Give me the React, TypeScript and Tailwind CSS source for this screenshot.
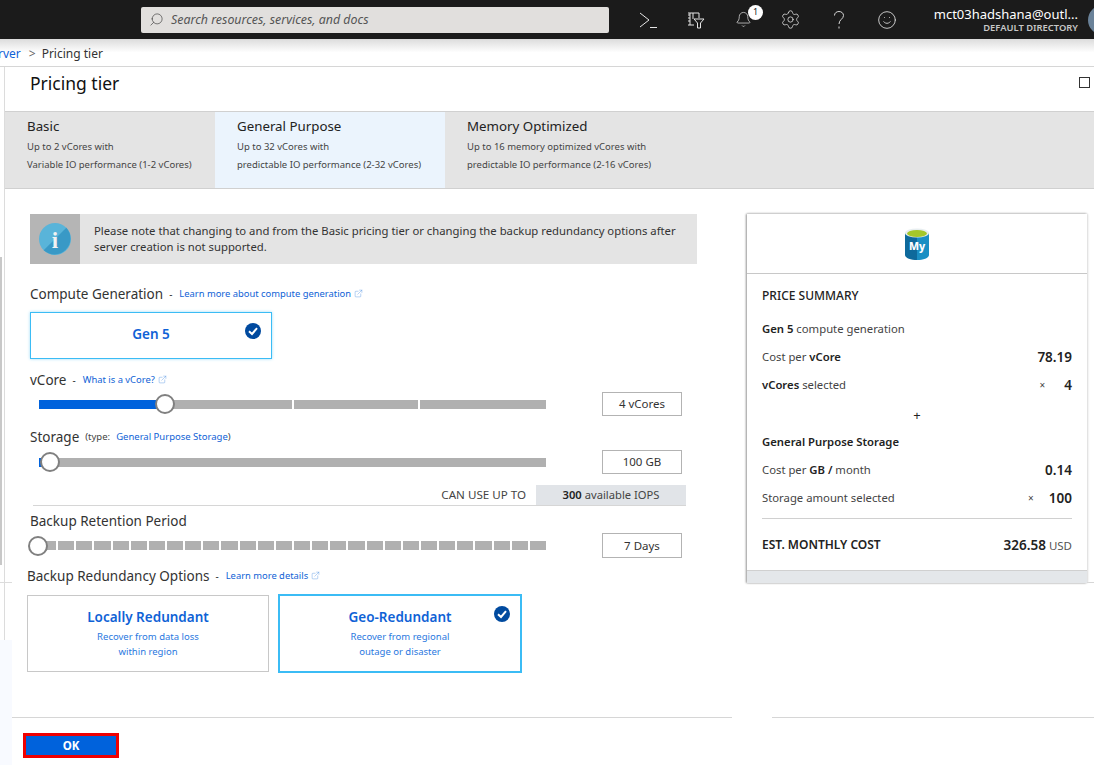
import { Bell, ExternalLink, Search, Settings, Smile } from "lucide-react";

const font = { fontFamily: "'Noto Sans', 'Open Sans', sans-serif" };

function CheckBadge() {
  return (
    <svg className="absolute right-[10px] top-[10px] h-4 w-4" viewBox="0 0 16 16">
      <circle cx="8" cy="8" r="8" fill="#004a9f" />
      <path d="M4 8.3 L7 11 L12 5.2" fill="none" stroke="white" strokeWidth="2" />
    </svg>
  );
}

function Link({ text }: { text: string }) {
  return (
    <span className="ml-[7px] inline-flex items-center gap-[3px] text-[9.4px] text-[#0f62d6]">
      {text}
      <ExternalLink size={9} strokeWidth={1} className="text-[#3d86e0]" />
    </span>
  );
}

function Thumb({ left }: { left: number }) {
  return (
    <div
      className="absolute top-1/2 h-5 w-5 -translate-y-1/2 rounded-full border-2 border-[#808080] bg-white"
      style={{ left }}
    />
  );
}

function ValueBox({ text, h = "h-6" }: { text: string; h?: string }) {
  return (
    <div className={`ml-[56px] flex w-20 items-center justify-center border border-[#b3b3b3] text-[11.5px] text-[#333] ${h}`}>
      {text}
    </div>
  );
}

function Row({ left, right }: { left: React.ReactNode; right?: React.ReactNode }) {
  return (
    <div className="flex h-7 items-center justify-between text-[11.3px] text-[#444]">
      <div>{left}</div>
      {right && <div className="flex items-center">{right}</div>}
    </div>
  );
}

export default function App() {
  return (
    <div className="relative flex h-[765px] w-[1094px] flex-col overflow-hidden bg-white" style={font}>
      {/* top bar */}
      <div className="flex h-[39px] shrink-0 items-center bg-[#1b1b1b] pl-[141px] text-white">
        <div className="flex h-[26px] w-[468px] shrink-0 items-center rounded-[2px] bg-[#e1dfdd] pl-2 text-[12.4px] italic text-[#555]">
          <Search size={15} strokeWidth={1} className="-scale-x-100 text-[#333]" />
          <span className="ml-[7px] pt-[2px]">Search resources, services, and docs</span>
        </div>
        <svg className="ml-[30px] h-[18px] w-[18px] shrink-0" viewBox="0 0 18 18" fill="none" stroke="#e6e6e6" strokeWidth="1">
          <path d="M1 2 L10 9 L1 16" />
          <path d="M11 16.5 H18" />
        </svg>
        <svg className="ml-[30px] h-[18px] w-[18px] shrink-0" viewBox="0 0 18 18" fill="none" stroke="#e6e6e6" strokeWidth="1">
          <path d="M1 2 H12 M3 2 V14 M1 14 H7 M1 4 H3 M1 7 H3 M1 10 H3" />
          <path d="M6 2 V8 M12 2 V7" />
          <path d="M7 8 H17 L13.5 12 V17 H10.5 V12 Z" />
        </svg>
        <div className="relative ml-[30px] h-[18px] w-[18px] shrink-0">
          <Bell size={17} strokeWidth={1} className="text-[#e6e6e6]" />
          <div className="absolute -right-[10px] -top-[6px] flex h-[15px] w-[15px] items-center justify-center rounded-full bg-white text-[9px] text-[#222]">
            1
          </div>
        </div>
        <Settings size={21} strokeWidth={0.9} className="ml-[27px] shrink-0 text-[#e6e6e6]" />
        <svg className="ml-[33px] h-[18px] w-[10px] shrink-0" viewBox="0 0 10 18" fill="none" stroke="#d8d8d8" strokeWidth="1">
          <path d="M0.5 4.5 C0.5 2 2.5 0.5 5 0.5 C7.5 0.5 9.5 2.2 9.5 4.5 C9.5 8 5 8.5 5 13" />
          <path d="M5 15.5 V17.5" />
        </svg>
        <Smile size={20} strokeWidth={1} className="ml-[33px] shrink-0 text-[#e6e6e6]" />
        <div className="ml-[35px] flex w-[146px] shrink-0 flex-col items-end">
          <span className="whitespace-nowrap text-[13px] leading-[16px]">mct03hadshana@outl...</span>
          <span className="whitespace-nowrap text-[9.4px] font-semibold leading-[12px] text-[#c8c8c8]">DEFAULT DIRECTORY</span>
        </div>
        <div className="-mr-[25px] ml-[10px] h-[30px] w-[30px] shrink-0 rounded-full bg-[#6a8299]" />
      </div>

      {/* breadcrumb */}
      <div className="flex h-[28px] shrink-0 items-center border-b border-[#d6d6d6] bg-gradient-to-b from-[#dcdcdc] via-white to-white pt-[2px] text-[12px] text-[#333]">
        <span className="-ml-[2px] text-[#0f62d6]">rver</span>
        <span className="ml-[8px] text-[#666]">&gt;</span>
        <span className="ml-[6px]">Pricing tier</span>
      </div>

      <div className="flex min-h-0 flex-1">
        {/* left gutter */}
        <div className="flex w-[5px] shrink-0 flex-col border-r border-[#dcdcdc]">
          <div className="mt-[190px] h-[308px] w-[2px] bg-[#c8c8c8]" />
        </div>

        <div className="flex min-w-0 flex-1 flex-col">
          {/* title */}
          <div className="flex h-[44px] shrink-0 items-start justify-between pl-[25px] pr-[4px]">
            <h1 className="mt-[2px] text-[17.5px] leading-[28px] text-[#111]">Pricing tier</h1>
            <div className="mt-[10px] h-[11px] w-[11px] border border-[#333]" />
          </div>

          {/* tabs */}
          <div className="flex h-[78px] shrink-0 border-y border-[#d0d0d0] bg-[#e4e4e4] text-[#444]">
            <div className="w-[210px] pl-[22px] pt-[4px]">
              <div className="text-[13.3px] leading-[20px] text-[#222]">Basic</div>
              <div className="mt-[2px] text-[9.5px] leading-[18px]">Up to 2 vCores with</div>
              <div className="text-[9.5px] leading-[18px]">Variable IO performance (1-2 vCores)</div>
            </div>
            <div className="w-[230px] bg-[#ebf4fd] pl-[22px] pt-[4px]">
              <div className="text-[13.3px] leading-[20px] text-[#222]">General Purpose</div>
              <div className="mt-[2px] text-[9.5px] leading-[18px]">Up to 32 vCores with</div>
              <div className="text-[9.5px] leading-[18px]">predictable IO performance (2-32 vCores)</div>
            </div>
            <div className="pl-[22px] pt-[4px]">
              <div className="text-[13.3px] leading-[20px] text-[#222]">Memory Optimized</div>
              <div className="mt-[2px] text-[9.5px] leading-[18px]">Up to 16 memory optimized vCores with</div>
              <div className="text-[9.5px] leading-[18px]">predictable IO performance (2-16 vCores)</div>
            </div>
          </div>

          {/* body */}
          <div className="flex min-h-0 flex-1 pl-[25px]">
            <div className="w-[667px] shrink-0 pt-[25px]">
              <div className="flex h-[50px] bg-[#e4e4e4]">
                <div className="flex w-[50px] shrink-0 items-center justify-center bg-[#b5b5b5]">
                  <svg className="h-8 w-8" viewBox="0 0 32 32">
                    <circle cx="16" cy="16" r="16" fill="#59b4d9" />
                    <path d="M27.3 4.7 A16 16 0 0 1 4.7 27.3 Z" fill="#3999c6" />
                    <text x="16" y="25" textAnchor="middle" fontFamily="'Liberation Serif', serif" fontWeight="700" fontSize="23" fill="#f2f2f2">i</text>
                  </svg>
                </div>
                <div className="whitespace-nowrap pl-[14px] pt-[9px] text-[11.3px] leading-[16px] text-[#333]">
                  Please note that changing to and from the Basic pricing tier or changing the backup redundancy options after
                  <br />
                  server creation is not supported.
                </div>
              </div>

              <div className="mt-[20px] flex h-5 items-center text-[13.5px] text-[#333]">
                Compute Generation
                <span className="ml-[6px] text-[10px]">-</span>
                <Link text="Learn more about compute generation" />
              </div>
              <div className="relative mt-[8px] flex h-[47px] w-[242px] items-center justify-center border border-[#3bbcf5] pb-[3px] text-[13.5px] font-semibold text-[#0f62d6] shadow-[0_0_3px_#9fdcf8]">
                Gen 5
                <CheckBadge />
              </div>

              <div className="mt-[11px] flex h-5 items-center text-[13.5px] text-[#333]">
                vCore
                <span className="ml-[6px] text-[10px]">-</span>
                <Link text="What is a vCore?" />
              </div>
              <div className="mt-[2px] flex h-6 items-center pl-[9px]">
                <div className="relative flex h-[9px] w-[507px] gap-[2px]">
                  <div className="flex w-[253px] bg-[#b0b0b0]">
                    <div className="w-[127px] bg-[#0062dc]" />
                  </div>
                  <div className="w-[124px] bg-[#b0b0b0]" />
                  <div className="flex-1 bg-[#b0b0b0]" />
                  <Thumb left={116} />
                </div>
                <ValueBox text="4 vCores" />
              </div>

              <div className="mt-[11px] flex h-5 items-center text-[13.5px] text-[#333]">
                Storage
                <span className="ml-[6px] text-[9.5px] text-[#444]">(type:</span>
                <span className="ml-[6px] text-[9.5px] text-[#0f62d6]">General Purpose Storage</span>
                <span className="text-[9.5px] text-[#444]">)</span>
              </div>
              <div className="mt-[3px] flex h-6 items-center pl-[9px]">
                <div className="relative flex h-[9px] w-[507px] bg-[#b0b0b0]">
                  <div className="w-[6px] bg-[#0062dc]" />
                  <Thumb left={1} />
                </div>
                <ValueBox text="100 GB" />
              </div>

              <div className="ml-[3px] mt-[11px] flex h-[21px] w-[653px] items-stretch justify-end border-b border-[#d6d6d6] text-[#444]">
                <span className="mr-[10px] flex items-center text-[11.6px]">CAN USE UP TO</span>
                <span className="flex w-[150px] items-center justify-center bg-[#e1e4e8] text-[11.2px]">
                  <b className="mr-[3px] font-semibold text-[#222]">300</b> available IOPS
                </span>
              </div>

              <div className="mt-[5px] flex h-5 items-center text-[13.5px] text-[#333]">Backup Retention Period</div>
              <div className="mt-[2px] flex h-[25px] items-center pl-[10px]">
                <div className="relative flex h-[9px] w-[506px] gap-[2px]">
                  {Array.from({ length: 28 }).map((_, i) => (
                    <div key={i} className="flex-1 bg-[#b0b0b0]" />
                  ))}
                  <Thumb left={-12} />
                </div>
                <ValueBox text="7 Days" h="h-[25px]" />
              </div>

              <div className="-ml-[3px] mt-[8px] flex h-5 items-center text-[13.5px] text-[#333]">
                Backup Redundancy Options
                <span className="ml-[6px] text-[10px]">-</span>
                <Link text="Learn more details" />
              </div>
              <div className="-ml-[3px] mt-[8px] flex items-start">
                <div className="mt-[1px] flex h-[77px] w-[242px] flex-col items-center border border-[#c8c8c8] pt-[11px]">
                  <div className="text-[13.5px] font-semibold leading-[20px] text-[#0f62d6]">Locally Redundant</div>
                  <div className="mt-[2px] text-center text-[9.5px] leading-[15px] text-[#2a78e0]">
                    Recover from data loss
                    <br />
                    within region
                  </div>
                </div>
                <div className="relative ml-[9px] flex h-[79px] w-[244px] flex-col items-center border-2 border-[#3bbcf5] pt-[11px]">
                  <div className="text-[13.5px] font-semibold leading-[20px] text-[#0f62d6]">Geo-Redundant</div>
                  <div className="mt-[2px] text-center text-[9.5px] leading-[15px] text-[#2a78e0]">
                    Recover from regional
                    <br />
                    outage or disaster
                  </div>
                  <CheckBadge />
                </div>
              </div>
            </div>

            {/* price summary */}
            <div className="ml-[50px] h-[394px] w-[347px] shrink-0 border-b border-[#d6d6d6] pt-[25px]">
              <div className="flex h-[369px] w-[340px] flex-col shadow-[-1px_0_2px_#999,0_-1px_2px_#e4e4e4,1px_0_2px_#e4e4e4]">
                <div className="flex h-[60px] shrink-0 items-center justify-center border-b border-[#c8c8c8]">
                  <svg className="h-8 w-6" viewBox="0 0 24 32">
                    <path d="M0 5 V27 C0 30 6 32 12 32 V5 Z" fill="#0e6a9c" />
                    <path d="M24 5 V27 C24 30 18 32 12 32 V5 Z" fill="#1a8fc4" />
                    <ellipse cx="12" cy="5" rx="12" ry="4.5" fill="#e8eef0" />
                    <ellipse cx="12" cy="5.5" rx="10" ry="3.5" fill="#a4c72a" />
                    <text x="12" y="22" textAnchor="middle" fontSize="10.5" fontWeight="800" fontFamily="'Noto Sans', sans-serif" fill="#ffffff">My</text>
                  </svg>
                </div>
                <div className="flex-1 px-[15px] pt-[7px]">
                  <div className="flex h-7 items-center pt-[2px] text-[12px] font-medium text-[#222]">PRICE SUMMARY</div>
                  <div className="mt-[6px]">
                    <Row left={<><b className="font-semibold text-[#222]">Gen 5</b> compute generation</>} />
                    <Row
                      left={<>Cost per <b className="font-semibold text-[#222]">vCore</b></>}
                      right={<b className="text-[13.5px] font-semibold text-[#222]">78.19</b>}
                    />
                    <Row
                      left={<><b className="font-semibold text-[#222]">vCores</b> selected</>}
                      right={<><span className="mr-[19px] text-[10px]">×</span><b className="text-[13.5px] font-semibold text-[#222]">4</b></>}
                    />
                    <div className="flex h-[31px] items-center justify-center pt-[2px] text-[13px] text-[#222]">+</div>
                    <div className="-mt-[2px] flex h-7 items-center text-[11.3px] font-semibold text-[#222]">General Purpose Storage</div>
                    <Row
                      left={<>Cost per <b className="font-semibold text-[#222]">GB /</b> month</>}
                      right={<b className="text-[13.5px] font-semibold text-[#222]">0.14</b>}
                    />
                    <Row
                      left="Storage amount selected"
                      right={<><span className="mr-[15px] text-[10px]">×</span><b className="text-[13.5px] font-semibold text-[#222]">100</b></>}
                    />
                  </div>
                  <div className="mt-[6px] flex h-[51px] items-center justify-between border-t border-[#d0d0d0] pt-[2px]">
                    <span className="text-[12px] font-semibold text-[#222]">EST. MONTHLY COST</span>
                    <span className="text-[11.5px] text-[#555]">
                      <b className="text-[13.5px] font-semibold text-[#222]">326.58</b> USD
                    </span>
                  </div>
                </div>
                <div className="h-[13px] shrink-0 border-t border-[#d0d0d0] bg-[#e4e7ea]" />
              </div>
            </div>
          </div>
        </div>
      </div>

      {/* footer */}
      <div className="z-10 h-[48px] shrink-0 bg-white">
        <div className="flex h-px">
          <div className="ml-[12px] w-[720px] bg-[#d6d6d6]" />
          <div className="ml-[40px] flex-1 bg-[#d6d6d6]" />
        </div>
        <div className="ml-[23px] mt-[15px] flex h-[25px] w-[96px] items-center justify-center border-[3px] border-[#f00000] bg-[#0062dc] text-[11.5px] font-bold text-white">
          OK
        </div>
      </div>

      {/* faint strip over the left edge */}
      <div className="absolute bottom-0 left-0 top-[640px] z-20 w-3 bg-[#f8faff]" />
      <div className="absolute left-0 top-[582px] z-20 h-px w-3 bg-[#dcdcdc]" />
    </div>
  );
}
